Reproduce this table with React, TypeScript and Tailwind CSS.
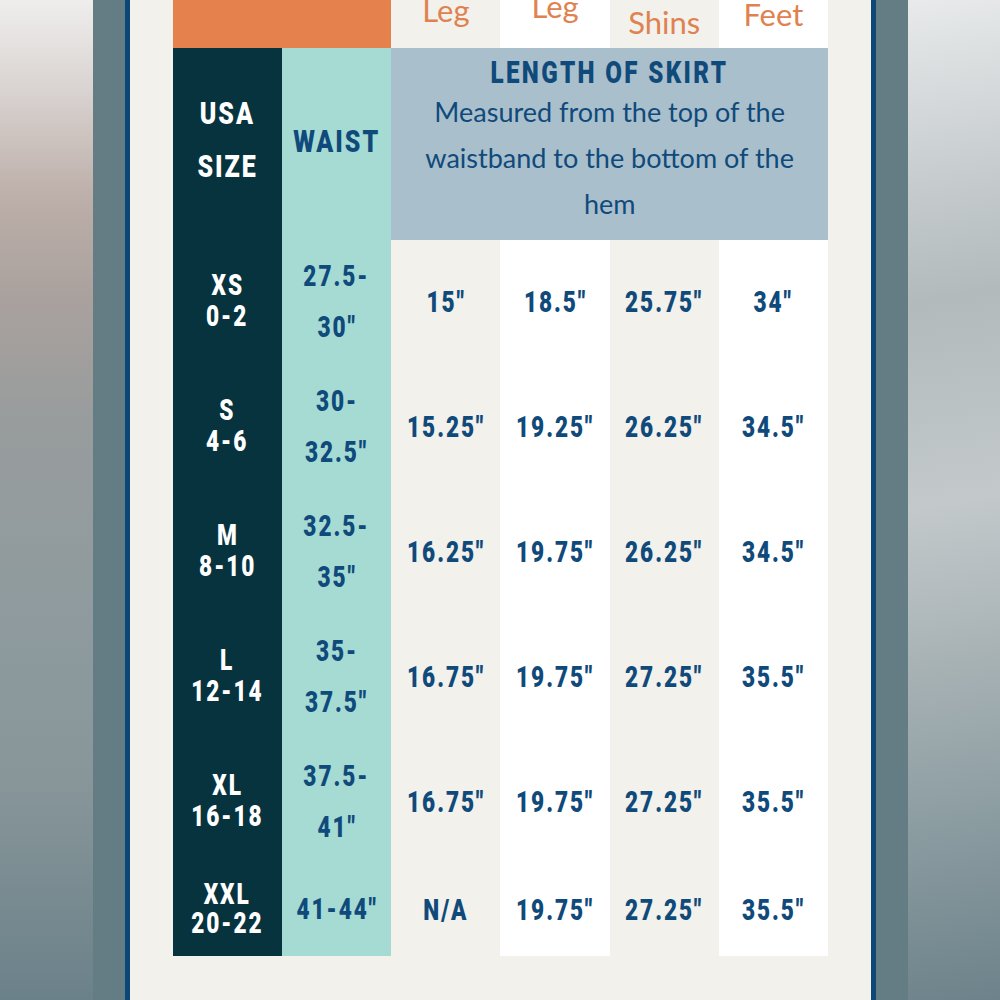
import React from "react";

const sizeRows = [
  { size: "XS", range: "0-2", waist: ["27.5-", '30"'], lengths: ['15"', '18.5"', '25.75"', '34"'] },
  { size: "S", range: "4-6", waist: ["30-", '32.5"'], lengths: ['15.25"', '19.25"', '26.25"', '34.5"'] },
  { size: "M", range: "8-10", waist: ["32.5-", '35"'], lengths: ['16.25"', '19.75"', '26.25"', '34.5"'] },
  { size: "L", range: "12-14", waist: ["35-", '37.5"'], lengths: ['16.75"', '19.75"', '27.25"', '35.5"'] },
  { size: "XL", range: "16-18", waist: ["37.5-", '41"'], lengths: ['16.75"', '19.75"', '27.25"', '35.5"'] },
  { size: "XXL", range: "20-22", waist: ['41-44"'], lengths: ["N/A", '19.75"', '27.25"', '35.5"'] },
];

// alternating column backgrounds for the 4 length columns
const colBg = ["bg-[#f2f1ec]", "bg-white", "bg-[#f2f1ec]", "bg-white"];

const labels = [
  { lines: ["Upper", "Leg"], pb: "pb-[22px] leading-[31px]" },
  { lines: ["Lower", "Leg"], pb: "pb-[26px] leading-[31px]" },
  { lines: ["Mid", "Shins"], pb: "pb-[9px] leading-[34px]" },
  { lines: ["Feet"], pb: "pb-[18px] leading-[31px]" },
];

// no condensed face installed, so squeeze Roboto horizontally
function Cond({ children, className = "" }: { children: React.ReactNode; className?: string }) {
  return (
    <span className={`inline-block origin-center scale-x-[0.78] whitespace-nowrap [font-family:Roboto,'Noto_Sans',sans-serif] font-black ${className}`}>
      {children}
    </span>
  );
}

export default function App() {
  return (
    <div className="flex h-[1000px] w-[1000px] overflow-hidden">
      {/* blurred photo edge, left */}
      <div className="w-[93px] bg-[linear-gradient(180deg,#efeeed_0%,#d9d3d1_9%,#bcaea8_20%,#a9a19e_30%,#989c9d_42%,#8f9b9e_60%,#88969a_78%,#6b8189_100%)]" />
      <div className="w-[32px] bg-[#647c84]" />
      <div className="w-[5px] bg-[#0d4777]" />

      <div className="flex-1 bg-[#f2f1ec] px-[43px]">
        <div className="grid w-[655px] grid-cols-6 grid-rows-[48px_192px_repeat(5,125px)_91px]">
          {/* header labels, top cut off by the crop */}
          <div className="col-span-2 bg-[#e5814d]" />
          {labels.map((l, i) => (
            <div
              key={i}
              className={`flex flex-col items-center justify-end overflow-hidden ${colBg[i]} ${l.pb} [font-family:Lato,sans-serif] text-[31px] text-[#e0824f]`}
            >
              {l.lines.map((t) => (
                <span key={t}>{t}</span>
              ))}
            </div>
          ))}

          {/* title row */}
          <div className="flex flex-col items-center justify-center bg-[#07333f] pb-[8px] text-[32px] leading-[53px] tracking-[2.5px] text-white">
            <Cond>USA</Cond>
            <Cond>SIZE</Cond>
          </div>
          <div className="flex items-center justify-center bg-[#a6dbd4] pb-[6px] text-[32px] tracking-[2.5px] text-[#104a7b]">
            <Cond>WAIST</Cond>
          </div>
          <div className="col-span-4 flex flex-col items-center bg-[#a9bfcc] pt-[10px] text-[#104a7b]">
            <Cond className="text-[31px] leading-[29px] tracking-[3px]">LENGTH OF SKIRT</Cond>
            <p className="mt-[2px] w-[380px] text-center [font-family:Lato,sans-serif] text-[27px] leading-[46px]">
              Measured from the top of the waistband to the bottom of the hem
            </p>
          </div>

          {sizeRows.map((r) => (
            <React.Fragment key={r.size}>
              <div
                className={`flex flex-col items-center justify-center bg-[#07333f] pb-[4px] text-[29px] tracking-[2.5px] text-white ${
                  r.size === "XXL" ? "leading-[29px]" : "leading-[31px]"
                }`}
              >
                <Cond>{r.size}</Cond>
                <Cond>{r.range}</Cond>
              </div>
              <div className="flex flex-col items-center justify-center bg-[#a6dbd4] pb-[2px] text-[29px] leading-[51px] tracking-[2.5px] text-[#104a7b]">
                {r.waist.map((w) => (
                  <Cond key={w}>{w}</Cond>
                ))}
              </div>
              {r.lengths.map((v, i) => (
                <div
                  key={i}
                  className={`flex items-center justify-center ${colBg[i]} text-[29px] tracking-[2.5px] text-[#104a7b]`}
                >
                  <Cond>{v}</Cond>
                </div>
              ))}
            </React.Fragment>
          ))}
        </div>
      </div>

      <div className="w-[5px] bg-[#0d4777]" />
      <div className="w-[32px] bg-[#647c84]" />
      {/* blurred photo edge, right */}
      <div className="w-[92px] bg-[linear-gradient(170deg,#e8eaeb_0%,#ccd1d3_15%,#b2babc_30%,#c3c9cb_50%,#a9b3b6_65%,#8b9ca1_82%,#6d828a_100%)]" />
    </div>
  );
}
